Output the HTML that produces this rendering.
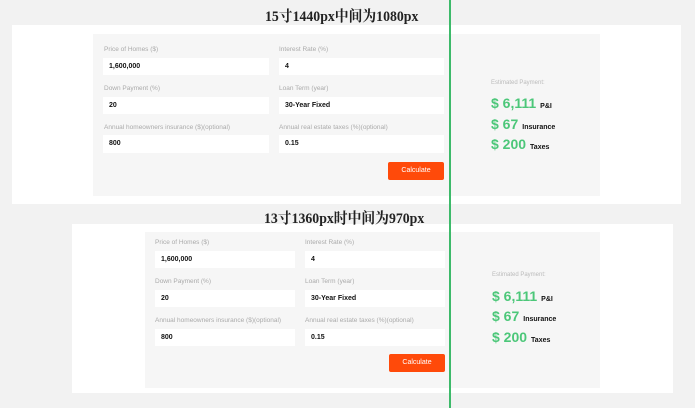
<!DOCTYPE html><html><head><meta charset="utf-8"><style>
body{margin:0;width:695px;height:408px;background:#f2f2f2;position:relative;overflow:hidden;font-family:"Liberation Sans",Arial,sans-serif}
div,span{position:absolute;box-sizing:border-box}
.w{background:#fff}.g{background:#f6f6f6}
.l{font-size:6.5px;color:#aaa;white-space:nowrap}
.i{background:#fff;font-size:7px;font-weight:bold;color:#111;padding-left:6px;line-height:17px}
.b{background:#ff4a0a;color:#fff;font-size:7px;text-align:center;border-radius:2px}
.t{font-family:"Liberation Serif","Noto Serif CJK SC",serif;font-size:15px;color:#222;white-space:nowrap;font-weight:bold;transform:scaleX(.92);transform-origin:left}
.e{font-size:6px;color:#bbb;white-space:nowrap}
.p{font-size:14px;color:#4cc779;white-space:nowrap;font-weight:bold}.p b{font-size:7px;color:#111;margin-left:4px}
</style></head><body>
<div class="t" style="left:265px;top:5px">15寸1440px中间为1080px</div>
<div class="w" style="left:12px;top:25px;width:669px;height:179px"></div>
<div class="g" style="left:93px;top:34px;width:507px;height:162px"></div>
<div class="l" style="left:104px;top:46px">Price of Homes ($)</div>
<div class="l" style="left:279px;top:46px">Interest Rate (%)</div>
<div class="i" style="left:103px;top:58px;width:166px;height:17px">1,600,000</div>
<div class="i" style="left:279px;top:58px;width:165px;height:17px">4</div>
<div class="l" style="left:104px;top:85px">Down Payment (%)</div>
<div class="l" style="left:279px;top:85px">Loan Term (year)</div>
<div class="i" style="left:103px;top:97px;width:166px;height:17px">20</div>
<div class="i" style="left:279px;top:97px;width:165px;height:17px">30-Year Fixed</div>
<div class="l" style="left:104px;top:124px">Annual homeowners insurance ($)(optional)</div>
<div class="l" style="left:279px;top:124px">Annual real estate taxes (%)(optional)</div>
<div class="i" style="left:103px;top:135px;width:166px;height:18px">800</div>
<div class="i" style="left:279px;top:135px;width:165px;height:18px">0.15</div>
<div class="b" style="left:388px;top:162px;width:56px;height:18px;line-height:18px">Calculate</div>
<div class="e" style="left:491px;top:80px">Estimated Payment:</div>
<div class="p" style="left:491px;top:95px">$ 6,111<b>P&amp;I</b></div>
<div class="p" style="left:491px;top:116px">$ 67<b>Insurance</b></div>
<div class="p" style="left:491px;top:136px">$ 200<b>Taxes</b></div>

<div class="w" style="left:72px;top:224px;width:601px;height:169px"></div>
<div class="t" style="left:264px;top:207px">13寸1360px时中间为970px</div>
<div class="g" style="left:145px;top:232px;width:455px;height:156px"></div>
<div class="l" style="left:155px;top:239px">Price of Homes ($)</div>
<div class="l" style="left:305px;top:239px">Interest Rate (%)</div>
<div class="i" style="left:155px;top:251px;width:140px;height:17px">1,600,000</div>
<div class="i" style="left:305px;top:251px;width:140px;height:17px">4</div>
<div class="l" style="left:155px;top:278px">Down Payment (%)</div>
<div class="l" style="left:305px;top:278px">Loan Term (year)</div>
<div class="i" style="left:155px;top:290px;width:140px;height:17px">20</div>
<div class="i" style="left:305px;top:290px;width:140px;height:17px">30-Year Fixed</div>
<div class="l" style="left:155px;top:317px">Annual homeowners insurance ($)(optional)</div>
<div class="l" style="left:305px;top:317px">Annual real estate taxes (%)(optional)</div>
<div class="i" style="left:155px;top:329px;width:140px;height:17px">800</div>
<div class="i" style="left:305px;top:329px;width:140px;height:17px">0.15</div>
<div class="b" style="left:389px;top:354px;width:56px;height:18px;line-height:18px">Calculate</div>
<div class="e" style="left:492px;top:272px">Estimated Payment:</div>
<div class="p" style="left:492px;top:288px">$ 6,111<b>P&amp;I</b></div>
<div class="p" style="left:492px;top:308px">$ 67<b>Insurance</b></div>
<div class="p" style="left:492px;top:329px">$ 200<b>Taxes</b></div>
<div style="left:449px;top:0;width:2px;height:408px;background:#3dba6a"></div>
</body></html>
